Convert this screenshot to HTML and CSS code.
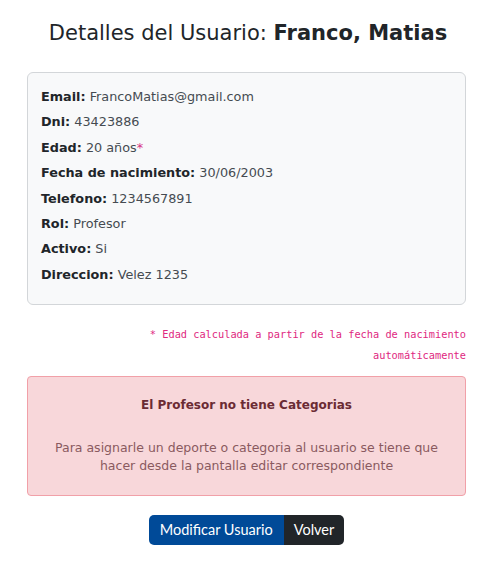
FILE: index.html
```html
<!DOCTYPE html>
<html lang="es">
<head>
<meta charset="utf-8">
<title>Detalles del Usuario</title>
<link rel="stylesheet" href="styles.css">
</head>
<body>
<main class="page">
  <h1 class="title">Detalles del Usuario: <strong>Franco, Matias</strong></h1>
  <section class="card">
    <p class="row"><b>Email:</b> FrancoMatias@gmail.com</p>
    <p class="row"><b>Dni:</b> 43423886</p>
    <p class="row"><b>Edad:</b> 20 años<span class="star">*</span></p>
    <p class="row"><b>Fecha de nacimiento:</b> 30/06/2003</p>
    <p class="row"><b>Telefono:</b> 1234567891</p>
    <p class="row"><b>Rol:</b> Profesor</p>
    <p class="row"><b>Activo:</b> Si</p>
    <p class="row"><b>Direccion:</b> Velez 1235</p>
  </section>
  <p class="note"><code>* Edad calculada a partir de la fecha de nacimiento automáticamente</code></p>
  <section class="alert">
    <h2 class="alert-title">El Profesor no tiene Categorias</h2>
    <p class="alert-text">Para asignarle un deporte o categoria al usuario se tiene que hacer desde la pantalla editar correspondiente</p>
  </section>
  <div class="actions">
    <a class="btn btn-primary" href="#">Modificar Usuario</a><a class="btn btn-dark" href="#">Volver</a>
  </div>
</main>
</body>
</html>
```
FILE: styles.css
```css
html, body { margin: 0; padding: 0; background: #fff; }
body {
  font-family: "DejaVu Sans", "Open Sans", sans-serif;
  color: #212529;
}
.page {
  width: 439px;
  padding: 18px 0 20px 27px;
}
.title {
  margin: 0 0 24px;
  text-align: center;
  font-weight: 400;
  font-size: 21px;
  line-height: 30px;
  padding-left: 3px;
}
.title strong { font-weight: 700; }
.card {
  background: #f8f9fa;
  border: 1px solid #d3d6d9;
  border-radius: 6px;
  padding: 11px 13px 17px;
}
.row {
  margin: 0;
  font-size: 12.8px;
  line-height: 25.4px;
  color: #454b51;
}
.row b { color: #212529; font-weight: 700; }
.star { color: #d63384; }
.note {
  margin: 18px 0 11px;
  text-align: right;
  line-height: 20px;
  padding-left: 110px;
}
.note code {
  font-family: "DejaVu Sans Mono", "Liberation Mono", monospace;
  font-size: 10.3px;
  color: #e0287f;
}
.alert {
  background: #f8d7da;
  border: 1px solid #f1a0a8;
  border-radius: 4px;
  padding: 17px 20px 20px;
  text-align: center;
}
.alert-title {
  margin: 0 0 23px;
  font-size: 12px;
  font-weight: 700;
  color: #6b2b34;
  line-height: 22px;
}
.alert-text {
  margin: 0;
  font-size: 12.5px;
  line-height: 18px;
  color: #8a5a5f;
}
.actions {
  display: flex;
  justify-content: center;
  margin-top: 19px;
}
.btn {
  display: inline-block;
  font-family: "Lato", sans-serif;
  font-size: 14.5px;
  line-height: 20px;
  padding: 5px 11px;
  color: #fff;
  text-decoration: none;
}
.btn-primary {
  background: #004a98;
  border-radius: 5px 0 0 5px;
}
.btn-dark {
  background: #212529;
  border-radius: 0 5px 5px 0;
  padding: 5px 10px;
}
```
